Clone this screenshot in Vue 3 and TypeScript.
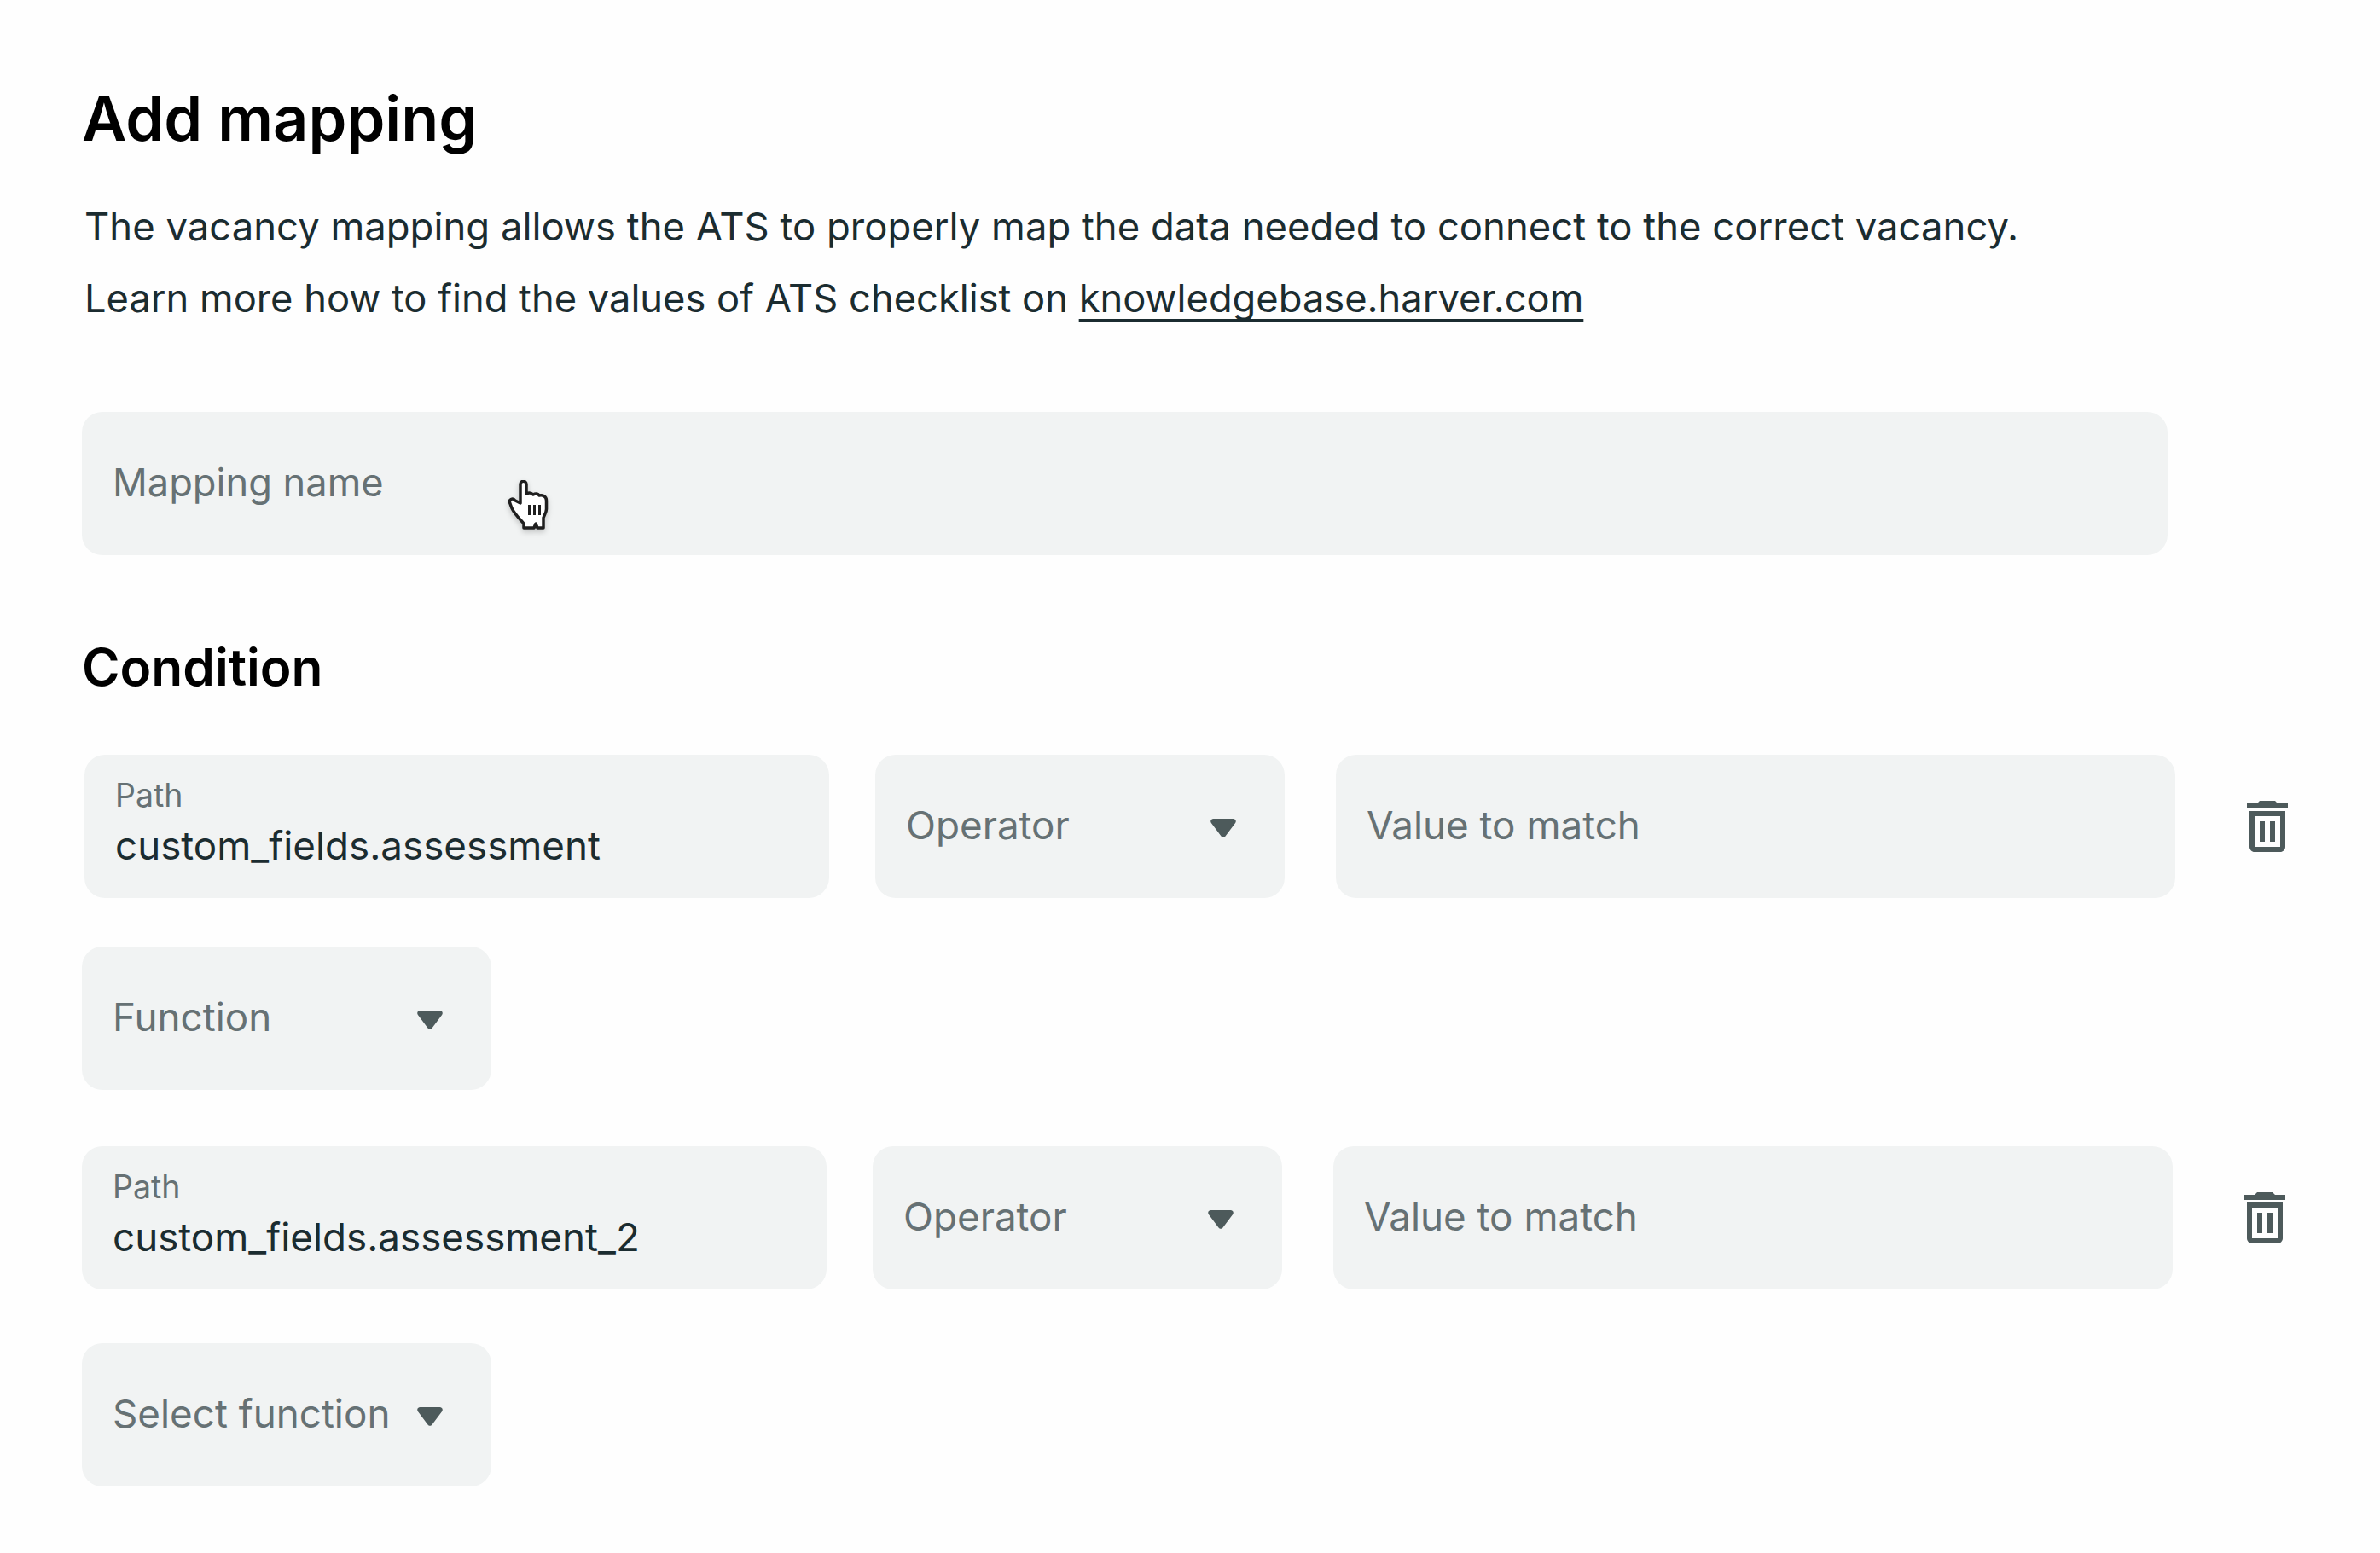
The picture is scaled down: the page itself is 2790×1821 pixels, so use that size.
<script setup lang="ts">
const bodyLine = 'The vacancy mapping allows the ATS to properly map the data needed to connect to the correct vacancy.'
</script>

<template>
  <main class="page">
    <h1 class="title">Add mapping</h1>
    <p class="intro first">{{ bodyLine }}</p>
    <p class="intro second">Learn more how to find the values of ATS checklist on <a class="link" href="#">knowledgebase.harver.com</a></p>

    <div class="field name-field">
      <span class="placeholder name-text">Mapping name</span>
      <svg class="cursor" width="48" height="60" viewBox="0 0 48 60" aria-hidden="true">
        <path d="M14 27V5C14 0 21 0 21 5V16C25 14 27 15 29 17C32 15 35 16 36 18C40 17 44.500 19 44.500 24V34C44.500 38 42 41 41 44V56H34L32 51L30 56H18V51C15 47 8 41 4 33L1.800 27C0 23 5 20 8 24Z" fill="#fff" stroke="#1f1f1f" stroke-width="3.500" stroke-linejoin="round"/>
        <path d="M24.500 29V41M30.500 29V41M36.500 29V41" stroke="#1f1f1f" stroke-width="3" fill="none"/>
      </svg>
    </div>

    <h2 class="subtitle">Condition</h2>

    <div class="row row-one">
      <div class="field path">
        <span class="label">Path</span>
        <span class="value">custom_fields.assessment</span>
      </div>
      <div class="field select operator">
        <span class="placeholder">Operator</span>
        <svg class="caret" width="30" height="22" viewBox="0 0 30 22"><path d="M3.500 0h23c2.800 0 4.200 2.800 2.600 5L17.500 20.500c-1.200 1.700-3.800 1.700-5 0L.9 5C-.7 2.800.7 0 3.500 0z"/></svg>
      </div>
      <div class="field match"><span class="placeholder">Value to match</span></div>
      <svg class="trash" width="48" height="60" viewBox="0 0 48 60"><path d="M12 3l3-3h18l3 3h12v6H0V3zM3 12h42v42c0 3.300-2.700 6-6 6H9c-3.300 0-6-2.700-6-6zM9 18v36h30V18zM15 24h6v24h-6zM27 24h6v24h-6z" fill-rule="evenodd"/></svg>
    </div>
    <div class="field select func func-one">
      <span class="placeholder">Function</span>
      <svg class="caret" width="30" height="22" viewBox="0 0 30 22"><path d="M3.500 0h23c2.800 0 4.200 2.800 2.600 5L17.500 20.500c-1.200 1.700-3.800 1.700-5 0L.9 5C-.7 2.800.7 0 3.500 0z"/></svg>
    </div>

    <div class="row row-two">
      <div class="field path">
        <span class="label">Path</span>
        <span class="value">custom_fields.assessment_2</span>
      </div>
      <div class="field select operator">
        <span class="placeholder">Operator</span>
        <svg class="caret" width="30" height="22" viewBox="0 0 30 22"><path d="M3.500 0h23c2.800 0 4.200 2.800 2.600 5L17.500 20.500c-1.200 1.700-3.800 1.700-5 0L.9 5C-.7 2.800.7 0 3.500 0z"/></svg>
      </div>
      <div class="field match"><span class="placeholder">Value to match</span></div>
      <svg class="trash" width="48" height="60" viewBox="0 0 48 60"><path d="M12 3l3-3h18l3 3h12v6H0V3zM3 12h42v42c0 3.300-2.700 6-6 6H9c-3.300 0-6-2.700-6-6zM9 18v36h30V18zM15 24h6v24h-6zM27 24h6v24h-6z" fill-rule="evenodd"/></svg>
    </div>
    <div class="field select func func-two">
      <span class="placeholder">Select function</span>
      <svg class="caret" width="30" height="22" viewBox="0 0 30 22"><path d="M3.500 0h23c2.800 0 4.200 2.800 2.600 5L17.500 20.500c-1.200 1.700-3.800 1.700-5 0L.9 5C-.7 2.800.7 0 3.500 0z"/></svg>
    </div>
  </main>
</template>

<style scoped>
.page {
  box-sizing: border-box;
  width: 2790px;
  height: 1821px;
  padding: 94px 0 0 96px;
  background: #fefefe;
  font-family: Inter, "Liberation Sans", sans-serif;
  overflow: hidden;
}
.title {
  margin: 0;
  font-size: 72px;
  line-height: 90px;
  font-weight: 600;
  color: #000;
}
.intro {
  margin: 0 0 0 3px;
  font-size: 45.45px;
  line-height: 84px;
  color: #1b2c30;
}
.first { margin-top: 40px; }
.second { font-size: 45.25px; }
.link {
  color: inherit;
  text-decoration: underline;
  text-underline-offset: 8px;
  text-decoration-thickness: 3px;
  text-decoration-skip-ink: none;
}
.field {
  box-sizing: border-box;
  position: relative;
  height: 168px;
  border-radius: 24px;
  background: #f1f3f3;
  padding: 0 36px;
  display: flex;
  align-items: center;
  font-size: 45.75px;
}
.name-field { width: 2445px; margin-top: 91px; }
.name-text { font-size: 45.2px; }
.placeholder { color: #667174; margin-top: -3px; }
.subtitle {
  margin: 92px 0 0;
  font-size: 60.4px;
  line-height: 78px;
  font-weight: 600;
  color: #000;
}
.row { display: flex; align-items: center; }
.row-one { margin: 64px 0 0 3px; }
.row-two { margin-top: 66px; }
.path {
  width: 873px;
  flex-direction: column;
  align-items: flex-start;
  justify-content: flex-start;
  padding-top: 25px;
}
.label { font-size: 37.500px; line-height: 46px; color: #667174; }
.value { margin-top: 8px; font-size: 45.75px; line-height: 56px; color: #1b2c30; }
.select { justify-content: space-between; padding-right: 57px; }
.operator { width: 480px; margin-left: 54px; }
.match { width: 984px; margin-left: 60px; }
.trash { margin-left: 84px; fill: #4d5a5b; }
.caret { fill: #4d5a5b; flex: none; margin-top: 3px; }
.func { width: 480px; }
.func-one { margin-top: 57px; }
.func-two { margin-top: 63px; }
.cursor { position: absolute; left: 500px; top: 80px; filter: drop-shadow(0 3px 3px rgba(0,0,0,.2)); }
</style>
